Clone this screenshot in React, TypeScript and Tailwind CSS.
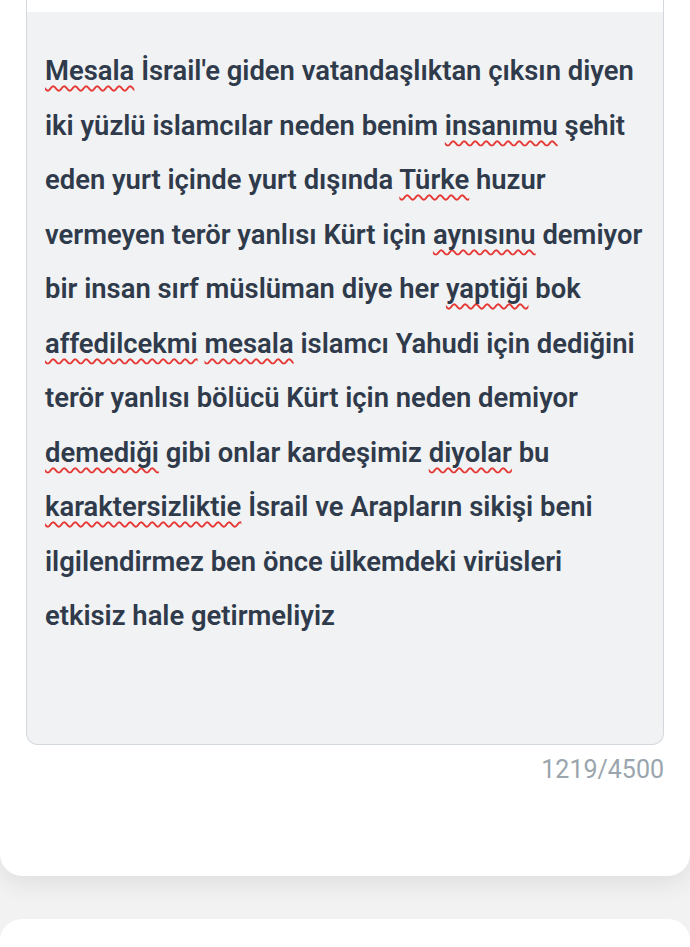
import React from 'react';

// each line is a list of [word, misspelled]
const lines: [string, boolean][][] = [
  [['Mesala', true], [" İsrail'e giden vatandaşlıktan çıksın diyen", false]],
  [['iki yüzlü islamcılar neden benim ', false], ['insanımu', true], [' şehit', false]],
  [['eden yurt içinde yurt dışında ', false], ['Türke', true], [' huzur', false]],
  [['vermeyen terör yanlısı Kürt için ', false], ['aynısınu', true], [' demiyor', false]],
  [['bir insan sırf müslüman diye her ', false], ['yaptiği', true], [' bok', false]],
  [['affedilcekmi', true], [' ', false], ['mesala', true], [' islamcı Yahudi için dediğini', false]],
  [['terör yanlısı bölücü Kürt için neden demiyor', false]],
  [['demediği', true], [' gibi onlar kardeşimiz ', false], ['diyolar', true], [' bu', false]],
  [['karaktersizliktie', true], [' İsrail ve Arapların sikişi beni', false]],
  [['ilgilendirmez ben önce ülkemdeki virüsleri', false]],
  [['etkisiz hale getirmeliyiz', false]],
];

const App = () => {
  return (
    <div className="min-h-screen bg-[#f2f2f2] overflow-hidden" style={{ fontFamily: 'Roboto, "Noto Sans", sans-serif' }}>
      {/* Kart */}
      <div className="bg-white rounded-b-[22px] shadow-[0_8px_24px_rgba(0,0,0,0.08)] px-[26px] h-[876px]">
        <div className="border-x border-b border-[#d3d8de] rounded-b-[12px] bg-[#f1f2f4] h-[745px]">
          <div className="h-[12px] bg-white" />
          <div className="pl-[18px] pr-[2px] pt-[32px] text-[27.4px] leading-[54.5px] font-semibold text-[#2f3a4b]">
            {lines.map((line, i) => (
              <div key={i} className="whitespace-pre">
                {line.map(([text, bad], j) =>
                  bad ? (
                    <span
                      key={j}
                      className="underline decoration-wavy decoration-[#e53935] decoration-[2px] underline-offset-[5px] [text-decoration-skip-ink:none]"
                    >
                      {text}
                    </span>
                  ) : (
                    <span key={j}>{text}</span>
                  )
                )}
              </div>
            ))}
          </div>
        </div>
        <div className="text-right text-[25px] text-[#9aa5ad] mt-[9px] leading-[32px]">1219/4500</div>
      </div>
      {/* Sonraki kart */}
      <div className="bg-white rounded-t-[22px] mt-[43px] h-[60px]" />
    </div>
  );
};

export default App;
